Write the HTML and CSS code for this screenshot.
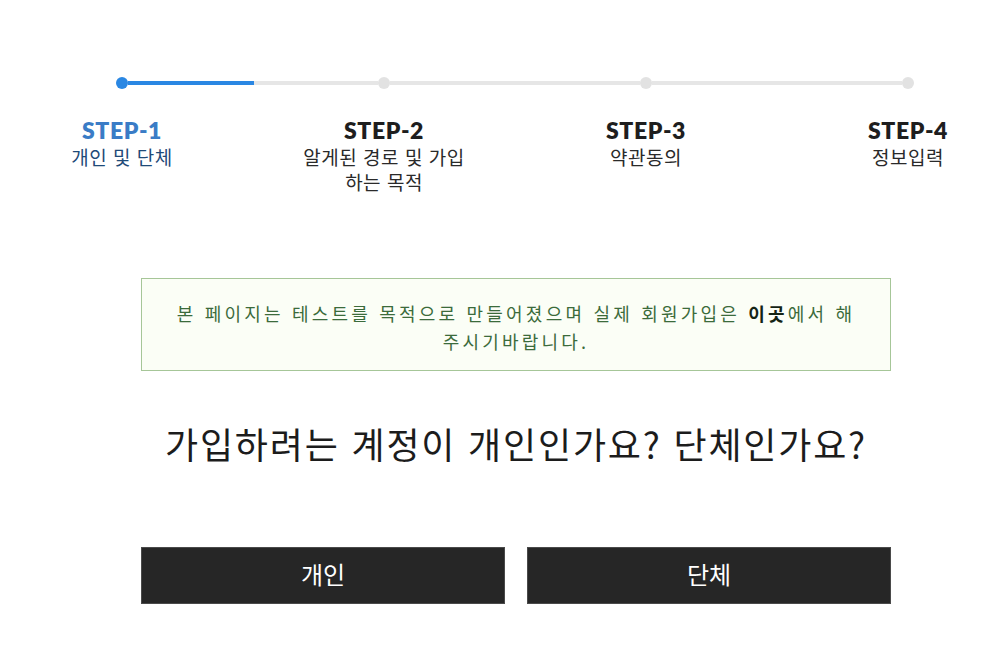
FILE: index.html
```html
<!DOCTYPE html>
<html lang="ko">
<head>
<meta charset="utf-8">
<title>회원가입</title>
<link rel="stylesheet" href="styles.css">
</head>
<body>
<div class="page">
  <div class="progress">
    <span class="dot dot-active"></span>
    <span class="seg seg-half"></span>
    <span class="dot"></span>
    <span class="seg"></span>
    <span class="dot"></span>
    <span class="seg"></span>
    <span class="dot"></span>
  </div>
  <div class="steps">
    <div class="step step-active">
      <div class="step-title">STEP-1</div>
      <div class="step-sub">개인 및 단체</div>
    </div>
    <div class="step">
      <div class="step-title">STEP-2</div>
      <div class="step-sub">알게된 경로 및 가입 하는 목적</div>
    </div>
    <div class="step">
      <div class="step-title">STEP-3</div>
      <div class="step-sub">약관동의</div>
    </div>
    <div class="step">
      <div class="step-title">STEP-4</div>
      <div class="step-sub">정보입력</div>
    </div>
  </div>
  <main class="content">
    <div class="notice">본 페이지는 테스트를 목적으로 만들어졌으며 실제 회원가입은 <b>이곳</b>에서 해<br>주시기바랍니다.</div>
    <h1 class="question">가입하려는 계정이 개인인가요? 단체인가요?</h1>
    <div class="choices">
      <button class="choice">개인</button>
      <button class="choice">단체</button>
    </div>
  </main>
</div>
</body>
</html>
```
FILE: styles.css
```css
html, body {
  margin: 0;
  padding: 0;
  background: #ffffff;
}
body {
  font-family: "Noto Sans CJK KR", "Noto Sans", sans-serif;
  color: #222;
}
.page {
  width: 1000px;
  padding-top: 77px;
}
.progress {
  display: flex;
  align-items: center;
  margin-left: 116px;
  width: 798px;
  height: 12px;
}
.dot {
  flex: 0 0 12px;
  width: 12px;
  height: 12px;
  border-radius: 50%;
  background: #e2e2e2;
}
.dot-active {
  background: #2a87e3;
}
.seg {
  flex: 1 1 auto;
  height: 4px;
  background: #e6e6e6;
}
.seg-half {
  background: linear-gradient(to right, #2a87e3 0, #2a87e3 50.4%, #e6e6e6 50.4%);
}
.steps {
  display: flex;
  justify-content: space-between;
  margin-left: 37px;
  width: 956px;
  margin-top: 27px;
}
.step {
  width: 170px;
  text-align: center;
}
.step-title {
  font-family: "Lato", "Noto Sans", sans-serif;
  font-weight: 800;
  font-size: 23px;
  line-height: 28px;
  color: #1e1e1e;
  letter-spacing: 0.6px;
}
.step-sub {
  font-size: 19px;
  line-height: 25px;
  letter-spacing: 0.5px;
  color: #2a2a2a;
}
.step-active .step-title {
  color: #3a7cc6;
}
.step-active .step-sub {
  color: #1f4a78;
}
.content {
  width: 750px;
  margin-left: 141px;
  margin-top: 84px;
}
.notice {
  border: 1px solid #a6c698;
  background: #fbfef6;
  color: #3b6b3b;
  font-size: 18px;
  line-height: 28px;
  letter-spacing: 3.2px;
  text-align: center;
  padding: 20px 29px 15px;
}
.notice b {
  color: #142414;
  font-weight: 700;
}
.question {
  margin: 50px 0 0;
  font-size: 36px;
  font-weight: 400;
  line-height: 44px;
  letter-spacing: 1.8px;
  text-align: center;
  color: #1c1c1c;
}
.choices {
  display: flex;
  gap: 22px;
  margin-top: 82px;
}
.choice {
  flex: 1 1 0;
  height: 57px;
  border: 1px solid #4a4a4a;
  background: #262626;
  color: #ffffff;
  font-family: "Noto Sans CJK KR", "Noto Sans", sans-serif;
  font-size: 24px;
  line-height: 30px;
  padding: 0 0 4px;
}
```
